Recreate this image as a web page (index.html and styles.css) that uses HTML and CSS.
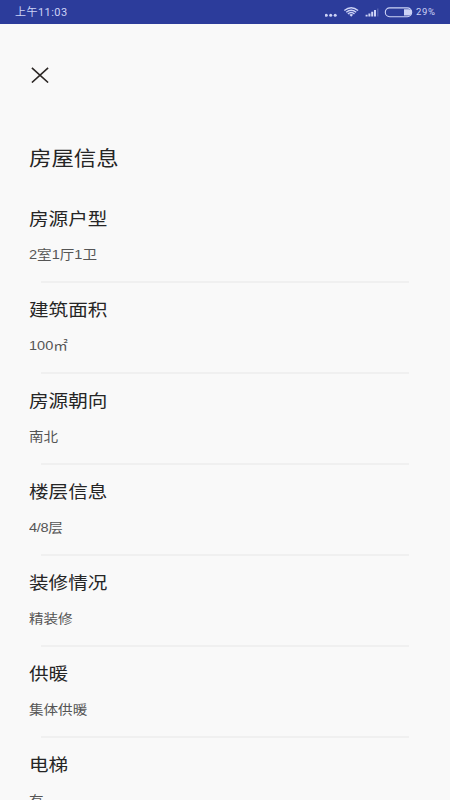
FILE: index.html
```html
<!DOCTYPE html>
<html lang="zh-CN">
<head>
<meta charset="utf-8">
<meta name="viewport" content="width=device-width">
<title>房屋信息</title>
<link rel="stylesheet" href="styles.css">
</head>
<body>
<header class="status">
  <span class="time">上午11:03</span>
  <svg class="icons" width="90" height="24" viewBox="0 0 90 24" aria-hidden="true">
    <g fill="#cdd3f6">
      <circle cx="1.300" cy="15.300" r="1.500"/><circle cx="5.700" cy="15.300" r="1.500"/><circle cx="10.200" cy="15.300" r="1.500"/>
      <path d="M24.300 14.800L26.200 16.800L28.100 14.800Q26.200 13.400 24.300 14.800Z"/>
      <path d="M40.600 16.400v-1.600h2v1.600zM43.400 16.400v-2.900h2v2.900zM46.200 16.400v-4.600h2v4.600zM49 16.400v-6.400h2v6.400z"/>
      <path d="M52.200 16.400V8.600h1.200v7.800z" opacity=".3"/>
      <path d="M79 9.200h4.600a2.900 2.900 0 0 1 0 6.200H79z"/>
    </g>
    <g fill="none" stroke="#cdd3f6" stroke-width="1.400">
      <path d="M19.300 10.500Q26.200 5.100 33.100 10.500M21.200 12.200Q26.200 8.200 31.200 12.200M22.900 13.900Q26.200 11.200 29.500 13.900"/>
      <rect x="60.300" y="7.900" width="26.400" height="8.800" rx="4.400" stroke-width="1.100"/>
    </g>
  </svg>
  <span class="percent">29%</span>
</header>
<main class="page">
  <svg class="close" width="18" height="16" viewBox="0 0 18 16" role="img"><path d="M.9.900L17.100 15.500M17.100.900L.9 15.500" fill="none" stroke="#2b2624" stroke-width="1.600"/></svg>
  <h1 class="title">房屋信息</h1>
  <section class="row"><h2 class="label">房源户型</h2><p class="value">2室1厅1卫</p></section>
  <section class="row"><h2 class="label">建筑面积</h2><p class="value">100㎡</p></section>
  <section class="row"><h2 class="label">房源朝向</h2><p class="value">南北</p></section>
  <section class="row"><h2 class="label">楼层信息</h2><p class="value floor">4/8层</p></section>
  <section class="row"><h2 class="label">装修情况</h2><p class="value">精装修</p></section>
  <section class="row"><h2 class="label">供暖</h2><p class="value">集体供暖</p></section>
  <section class="row"><h2 class="label">电梯</h2><p class="value">有</p></section>
</main>
</body>
</html>
```
FILE: styles.css
```css
* { box-sizing: border-box; }
body {
  margin: 0;
  height: 800px;
  overflow: hidden;
  display: flex;
  flex-direction: column;
  background: #f9f9f9;
  color: #262626;
  font-family: "Liberation Sans", "Noto Sans CJK SC", sans-serif;
}
.status {
  flex: none;
  height: 24px;
  display: flex;
  align-items: center;
  padding-left: 15px;
  background: #2c3c9b;
  color: #cdd3f6;
  font-family: Roboto, "Noto Sans CJK SC", sans-serif;
  font-size: 11px;
  line-height: 24px;
}
.time {
  width: 310px;
  padding-top: 1px;
  letter-spacing: .45px;
}
.icons { flex: none; }
.percent {
  margin-left: 1px;
  font-size: 9.500px;
  letter-spacing: .6px;
}
.page {
  flex: 1;
  min-height: 0;
  overflow: hidden;
  padding: 43px 41px 0 29px;
}
.close {
  display: block;
  margin-left: 2px;
}
/* Glyphs are wider than tall, so headings and values share one horizontal stretch. */
.title, .label, .value {
  width: max-content;
  margin: 0;
  font-weight: 400;
  transform: scaleX(1.12);
  transform-origin: left;
}
.title {
  margin-top: 61px;
  font-size: 20px;
  line-height: 30px;
}
.row {
  position: relative;
  height: 91.100px;
  padding-top: 14.500px;
}
.title + .row {
  height: 109px;
  padding-top: 33.400px;
}
.row::after {
  content: "";
  position: absolute;
  left: 12px;
  right: 0;
  bottom: 0;
  height: 2px;
  background: #f0f0f0;
}
.label {
  font-size: 17.500px;
  line-height: 24px;
}
.value {
  margin-top: 14px;
  color: #555;
  font-size: 13px;
  line-height: 20px;
}
.floor { letter-spacing: -.3px; }
```
